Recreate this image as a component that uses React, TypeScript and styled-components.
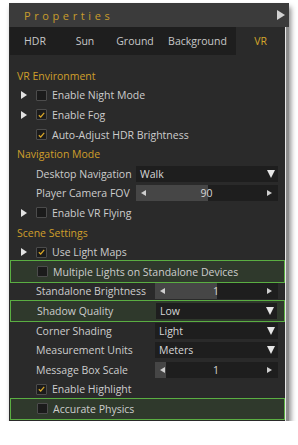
import React from "react";
import styled, { createGlobalStyle } from "styled-components";

const Global = createGlobalStyle`
  html, body { margin: 0; padding: 0; background: #ffffff; }
  body { font-family: "Open Sans", "Noto Sans", sans-serif; }
  * { box-sizing: border-box; }
`;

const Panel = styled.div`
  margin: 3px 0 0 9px;
  width: 280px;
  background: #2a2a2a;
  box-shadow: 2px 4px 5px rgba(0, 0, 0, 0.45);
  display: flex;
  flex-direction: column;
`;

const Header = styled.div`
  height: 24px;
  background: #3b3b3b;
  display: flex;
  align-items: center;
  justify-content: space-between;
  padding: 0 4px 0 15px;
`;

const Title = styled.span`
  color: #c89d2c;
  font-size: 11px;
  letter-spacing: 3.6px;
`;

const Body = styled.div`
  display: flex;
`;

const Content = styled.div`
  flex: 1;
  min-width: 0;
  display: flex;
  flex-direction: column;
  padding-bottom: 2px;
`;

const Scrollbar = styled.div`
  width: 4px;
  flex-shrink: 0;
  background: #8c8c8c;
  border-left: 1.5px solid #e6e6e6;
`;

const Tabs = styled.div`
  height: 28px;
  display: flex;
  background: #1e1e1e;
  margin-left: 1px;
  margin-bottom: 11px;
`;

const Tab = styled.div<{ $active?: boolean; $w: number }>`
  width: ${(p) => p.$w}px;
  flex-shrink: 0;
  display: flex;
  align-items: center;
  justify-content: center;
  font-size: 10.5px;
  font-weight: 500;
  color: ${(p) => (p.$active ? "#d4a52a" : "#c8c8c8")};
  background: ${(p) => (p.$active ? "#2a2a2a" : "transparent")};
  margin-left: ${(p) => (p.$active ? "auto" : "0")};
`;

const Heading = styled.div`
  height: 19.6px;
  display: flex;
  align-items: center;
  padding-left: 8px;
  font-size: 10.5px;
  font-weight: 500;
  color: #cf9f2a;
`;

const Row = styled.div<{ $hl?: boolean }>`
  height: ${(p) => (p.$hl ? "22.6px" : "19.6px")};
  margin: ${(p) => (p.$hl ? "-1.5px 0 -1.5px 1px" : "0")};
  padding-left: ${(p) => (p.$hl ? "11px" : "12px")};
  border: ${(p) => (p.$hl ? "1px solid #5aae42" : "none")};
  background: ${(p) => (p.$hl ? "#2f392c" : "transparent")};
  display: flex;
  align-items: center;
  font-size: 10.5px;
  font-weight: 500;
  color: #cdcdcd;
  position: relative;
  z-index: ${(p) => (p.$hl ? 1 : 0)};
`;

const Expander = styled.span<{ $show?: boolean }>`
  width: 15px;
  display: flex;
  align-items: center;
  &::before {
    content: "";
    display: ${(p) => (p.$show ? "block" : "none")};
    width: 0;
    height: 0;
    border-top: 4.5px solid transparent;
    border-bottom: 4.5px solid transparent;
    border-left: 6px solid #e2e2e2;
  }
`;

const Box = styled.span`
  width: 11px;
  height: 11px;
  border: 1px solid #4c4c4c;
  background: #1b1b1b;
  border-radius: 1px;
  display: flex;
  align-items: center;
  justify-content: center;
  margin-right: 5px;
`;

const Label = styled.span<{ $w?: number }>`
  width: ${(p) => (p.$w ? `${p.$w}px` : "auto")};
  padding-left: ${(p) => (p.$w ? "15px" : "0")};
  flex-shrink: 0;
  white-space: nowrap;
`;

const Dropdown = styled.div`
  height: 16px;
  background: #1e1e1e;
  display: flex;
  align-items: center;
  justify-content: space-between;
  padding: 0 3px 0 4px;
  color: #d6d6d6;
  flex: 1;
  margin-right: 7px;
`;

const DownArrow = styled.span`
  width: 0;
  height: 0;
  border-left: 4px solid transparent;
  border-right: 4px solid transparent;
  border-top: 8px solid #e6e6e6;
`;

const Slider = styled.div`
  flex: 1;
  margin-right: 7px;
  height: 16px;
  background: #1e1e1e;
  position: relative;
  display: flex;
  align-items: center;
  justify-content: space-between;
  padding: 0 6px 0 5px;
  color: #d6d6d6;
`;

const Fill = styled.div`
  position: absolute;
  left: 0;
  top: 0;
  bottom: 0;
  background: #464646;
`;

const Arrow = styled.span<{ $dir: "l" | "r" }>`
  position: relative;
  width: 0;
  height: 0;
  border-top: 3.5px solid transparent;
  border-bottom: 3.5px solid transparent;
  ${(p) =>
    p.$dir === "l"
      ? "border-right: 5px solid #cfcfcf;"
      : "border-left: 5px solid #cfcfcf;"}
`;

const Value = styled.span`
  position: relative;
`;

const Play = styled.span`
  width: 0;
  height: 0;
  border-top: 5.5px solid transparent;
  border-bottom: 5.5px solid transparent;
  border-left: 8px solid #d2d2d2;
`;

const Check = () => (
  <svg width="7" height="6" viewBox="0 0 7 6">
    <path d="M0.8 3.2 L2.7 5 L6.2 0.8" stroke="#d9a628" strokeWidth="1.2" fill="none" />
  </svg>
);

type CB = { label: string; checked?: boolean; exp?: boolean; hl?: boolean };

const CheckRow = ({ label, checked, exp, hl }: CB) => (
  <Row $hl={hl}>
    <Expander $show={exp} />
    <Box>{checked && <Check />}</Box>
    <Label>{label}</Label>
  </Row>
);

const DropRow = ({ label, value, w, hl }: { label: string; value: string; w: number; hl?: boolean }) => (
  <Row $hl={hl}>
    <Label $w={w}>{label}</Label>
    <Dropdown>
      <span>{value}</span>
      <DownArrow />
    </Dropdown>
  </Row>
);

const SliderRow = ({ label, value, w, frac }: { label: string; value: string; w: number; frac: number }) => (
  <Row>
    <Label $w={w}>{label}</Label>
    <Slider>
      <Fill style={{ width: `${frac * 100}%` }} />
      <Arrow $dir="l" />
      <Value>{value}</Value>
      <Arrow $dir="r" />
    </Slider>
  </Row>
);

export default function App() {
  return (
    <>
      <Global />
      <Panel>
        <Header>
          <Title>Properties</Title>
          <Play />
        </Header>
        <Body>
          <Content>
            <Tabs>
              <Tab $w={50}>HDR</Tab>
              <Tab $w={50}>Sun</Tab>
              <Tab $w={50}>Ground</Tab>
              <Tab $w={75}>Background</Tab>
              <Tab $w={49} $active>VR</Tab>
            </Tabs>
            <Heading>VR Environment</Heading>
            <CheckRow exp label="Enable Night Mode" />
            <CheckRow exp checked label="Enable Fog" />
            <CheckRow checked label="Auto-Adjust HDR Brightness" />
            <Heading>Navigation Mode</Heading>
            <DropRow w={115} label="Desktop Navigation" value="Walk" />
            <SliderRow w={115} label="Player Camera FOV" value="90" frac={0.505} />
            <CheckRow exp label="Enable VR Flying" />
            <Heading>Scene Settings</Heading>
            <CheckRow exp checked label="Use Light Maps" />
            <CheckRow hl label="Multiple Lights on Standalone Devices" />
            <SliderRow w={134} label="Standalone Brightness" value="1" frac={0.505} />
            <DropRow hl w={134} label="Shadow Quality" value="Low" />
            <DropRow w={134} label="Corner Shading" value="Light" />
            <DropRow w={134} label="Measurement Units" value="Meters" />
            <SliderRow w={134} label="Message Box Scale" value="1" frac={0.09} />
            <CheckRow checked label="Enable Highlight" />
            <CheckRow hl label="Accurate Physics" />
          </Content>
          <Scrollbar />
        </Body>
      </Panel>
    </>
  );
}
